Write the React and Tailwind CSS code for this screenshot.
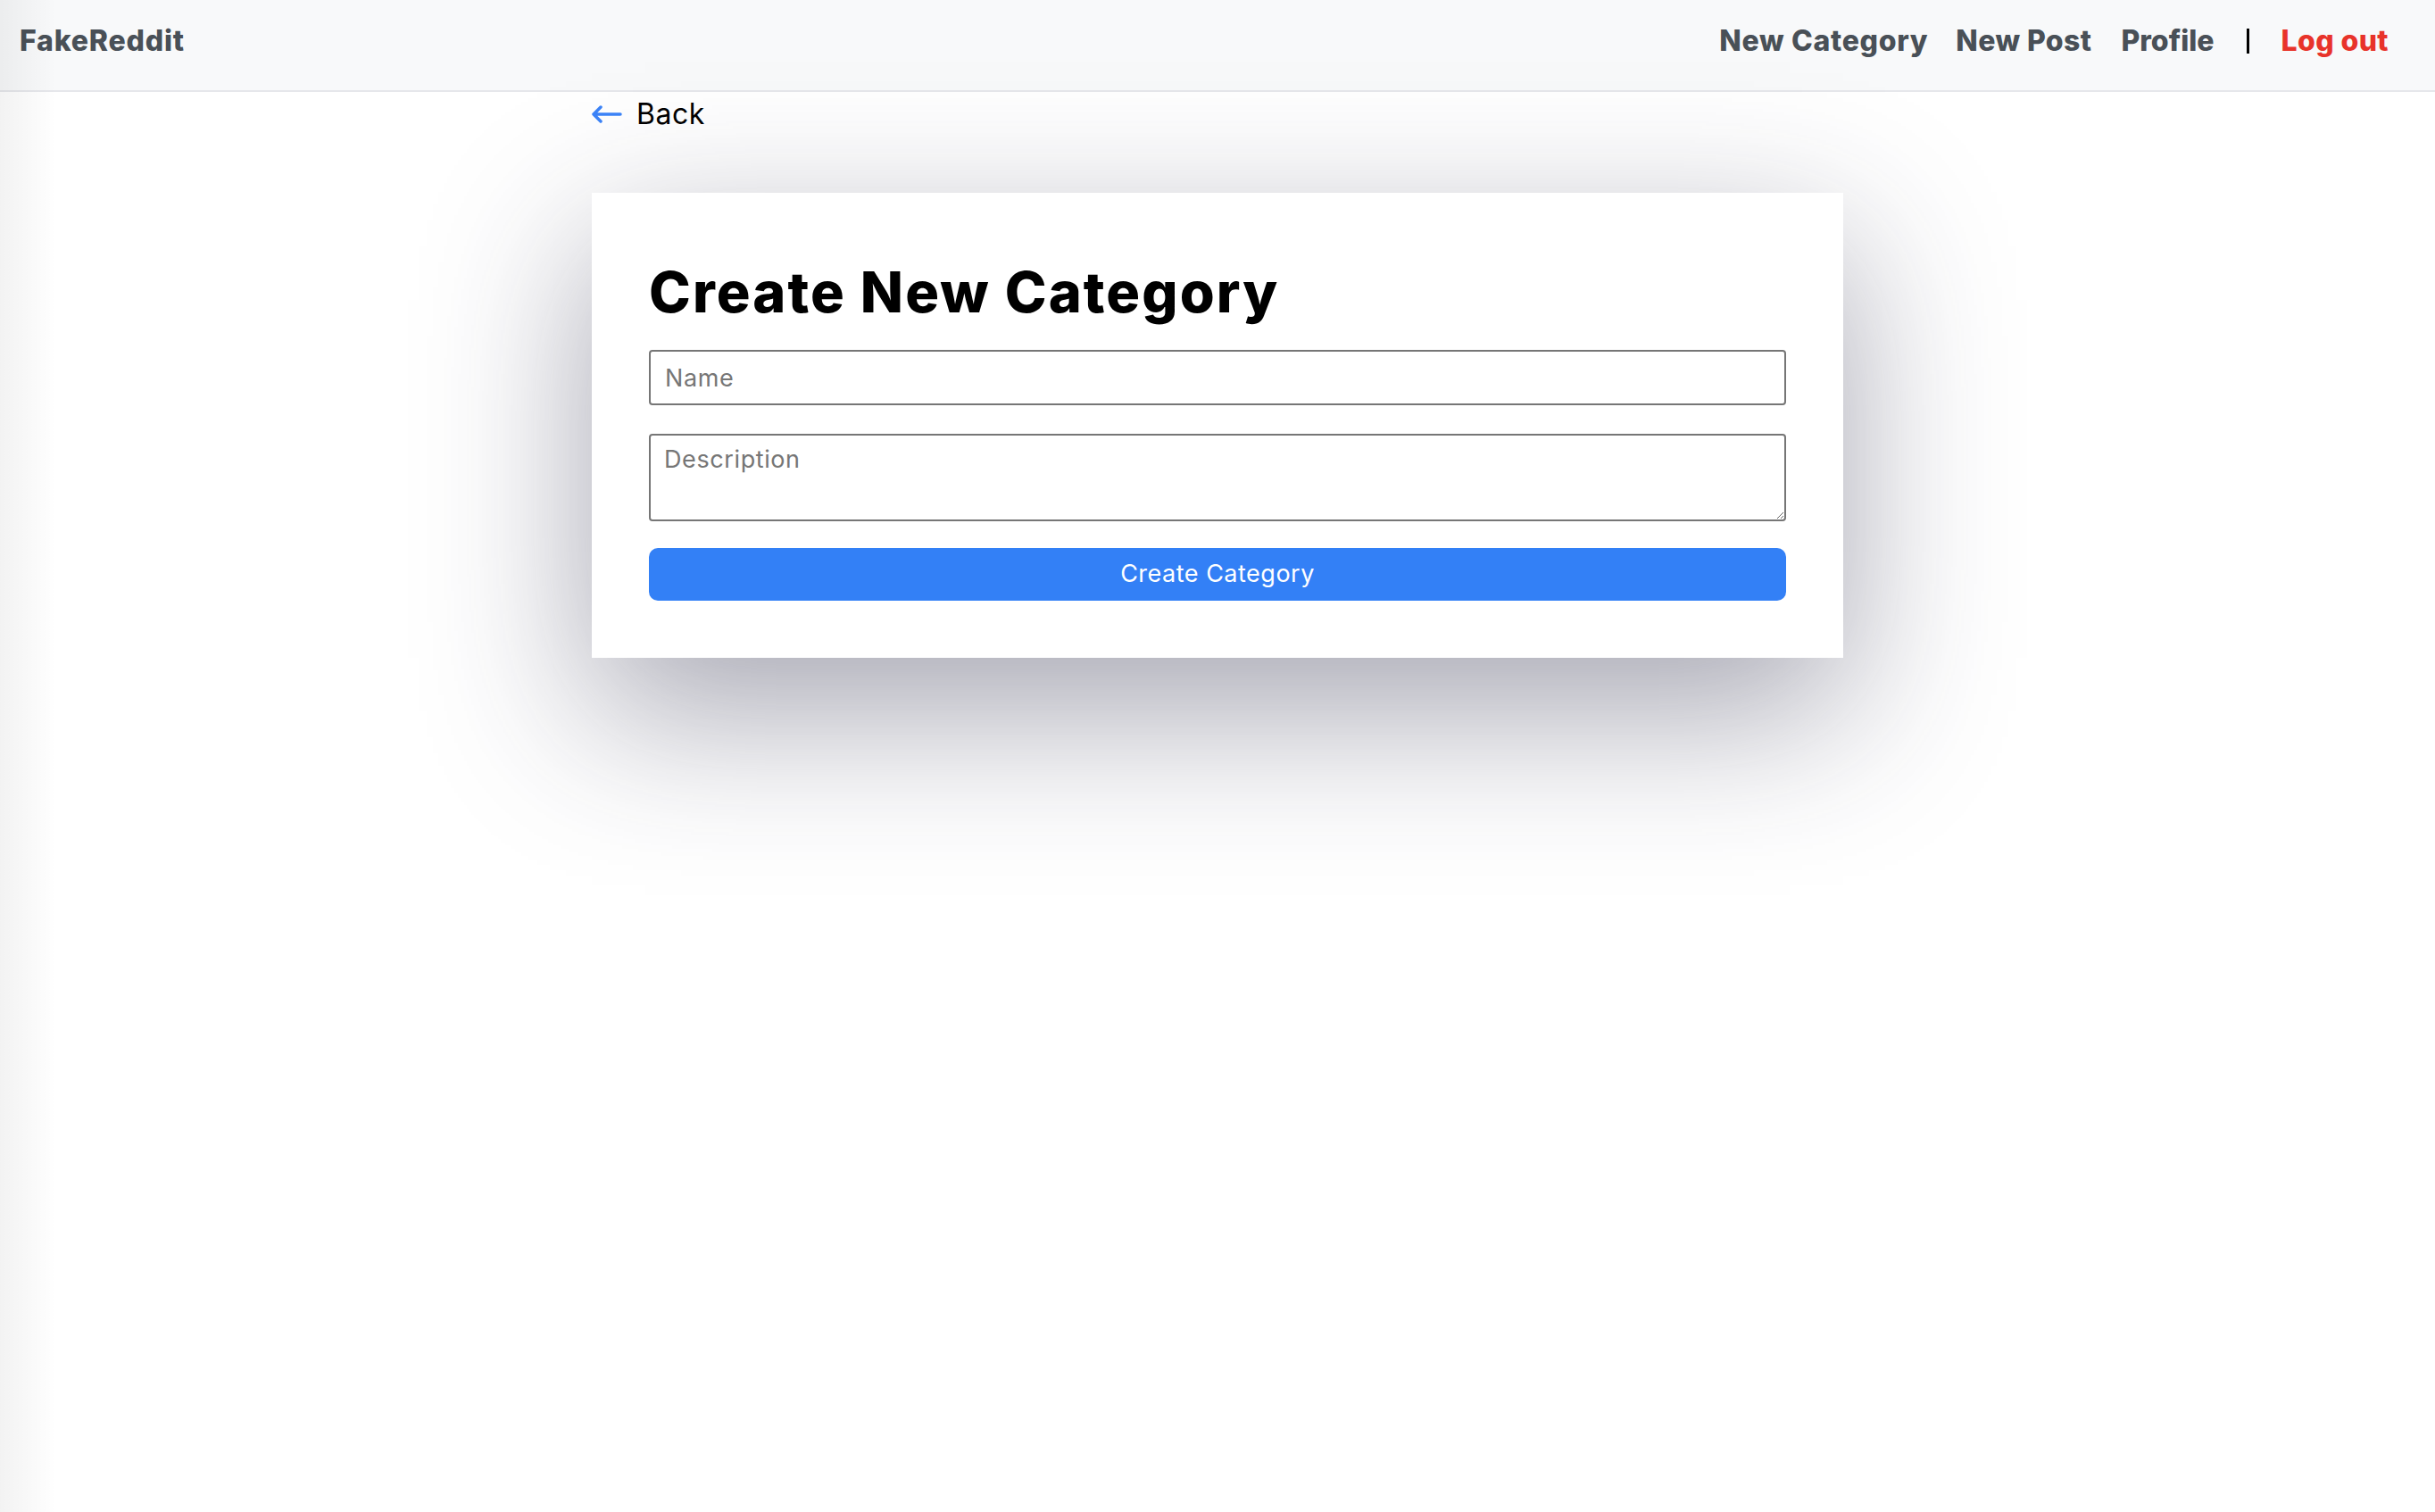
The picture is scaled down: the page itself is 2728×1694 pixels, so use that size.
import React from 'react';

const font = { fontFamily: 'Inter, "Noto Sans", sans-serif' };

const BackArrow = () => (
  <svg width="34" height="20" viewBox="0 0 34 20" fill="none" className="text-[#3b82f6]">
    <path d="M2 10 H32 M2 10 L10 2 M2 10 L10 18" stroke="currentColor" strokeWidth="3.5" strokeLinecap="round" strokeLinejoin="round" />
  </svg>
);

export default function App() {
  return (
    <div className="relative min-h-[1694px] bg-white" style={font}>

      {/* left edge shade */}
      <div className="pointer-events-none absolute left-0 top-0 z-10 h-full w-[64px] bg-gradient-to-r from-black/[0.05] to-transparent" />

      {/* ── Navbar ─────────────────────────────── */}
      <nav className="flex h-[103px] items-start justify-between border-b-2 border-[#e6e7eb] bg-[#f8f9fa] pl-[22px] pr-[52px] pt-[30px]">
        <span className="text-[32px] font-extrabold leading-[32px] tracking-[0.8px] text-[#495057]">FakeReddit</span>
        <div className="flex items-center text-[32px] font-extrabold leading-[32px] tracking-[0.4px] text-[#495057]">
          <a className="mr-[31px] tracking-[0.7px]">New Category</a>
          <a className="mr-[33px]">New Post</a>
          <a className="mr-[37px] tracking-[0px]">Profile</a>
          <span className="mr-[35px] h-[28px] w-[3px] bg-black" />
          <a className="text-[#e8332a]">Log out</a>
        </div>
      </nav>

      {/* ── Content ─────────────────────────────── */}
      <div className="mx-auto w-[1402px]">
        <a className="mt-[9px] flex h-[32px] items-center gap-[16px] text-[32px] leading-[32px] tracking-[0.5px] text-black">
          <BackArrow />
          <span>Back</span>
        </a>

        <div className="mt-[72px] bg-white p-16 shadow-[0_60px_170px_rgba(40,40,70,0.42)]">
          <h1 className="mt-4 mb-[33px] text-[63px] font-extrabold leading-[63px] tracking-[2.1px] text-black">
            Create New Category
          </h1>

          <input
            type="text"
            placeholder="Name"
            className="block h-[62px] w-full rounded-[4px] border-2 border-[#767676] px-[16px] text-[27px] tracking-[0.6px] text-black placeholder:text-[#767676] outline-none"
          />

          <textarea
            placeholder="Description"
            className="mt-[32px] block h-[98px] w-full rounded-[4px] border-2 border-[#767676] px-[15px] pt-[10px] text-[27px] leading-[33px] tracking-[0.6px] text-black placeholder:text-[#767676] outline-none"
          />

          <button className="mt-[30px] block h-[59px] w-full rounded-[10px] bg-[#3380f6] text-[27px] tracking-[0.5px] text-white">
            Create Category
          </button>
        </div>
      </div>
    </div>
  );
}
